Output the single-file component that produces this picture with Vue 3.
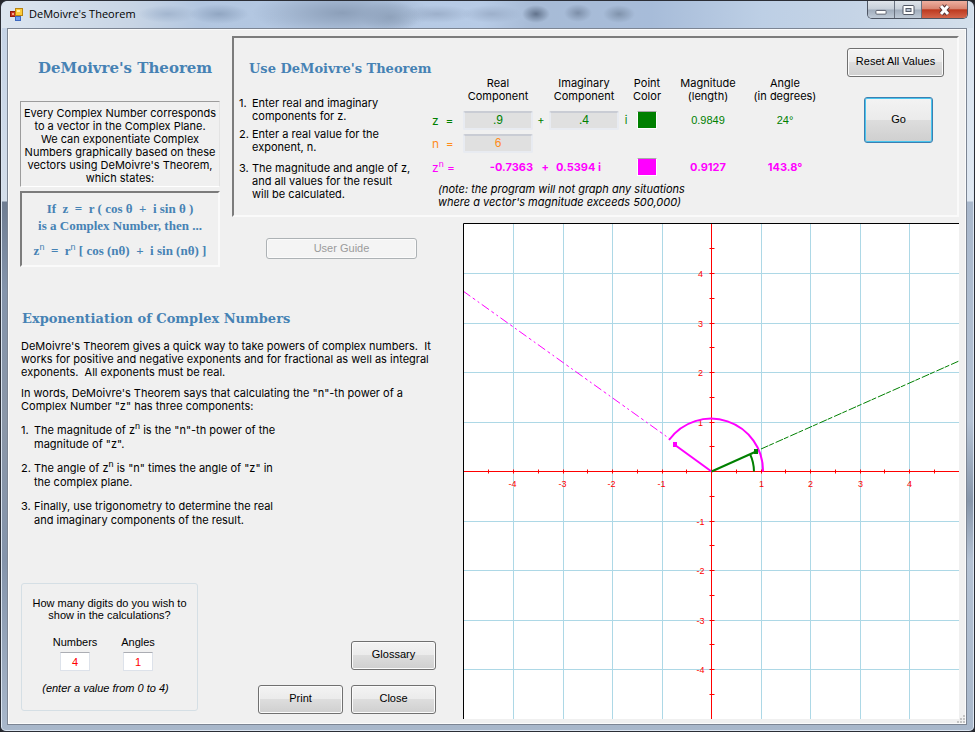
<script setup>
import { ref } from 'vue'

const realPart = ref('.9')
const imaginaryPart = ref('.4')
const exponent = ref('6')
const numberDigits = ref('4')
const angleDigits = ref('1')

// Plot geometry: centre of the axes and pixels per unit inside the view box
const cx = 248.5
const cy = 248.5
const unit = 49.5
const px = (n) => Math.round(cx + n * unit - 0.5) + 0.5
const py = (n) => Math.round(cy - n * unit - 0.5) + 0.5

const units = [-4, -3, -2, -1, 1, 2, 3, 4]
const ticks = []
for (let i = -9; i <= 9; i++) if (i !== 0) ticks.push(i / 2)
</script>

<template>
  <main class="window">
    <header class="titlebar">
      <svg class="app-icon" viewBox="0 0 13 13" aria-hidden="true">
        <rect x="0.5" y="3.5" width="5" height="5" fill="#c8321e" stroke="#8e1c10" />
        <rect x="2" y="5" width="2" height="2" fill="#f5a58c" />
        <rect x="5.5" y="0.5" width="7" height="7" fill="#fccb3a" stroke="#b98410" />
        <rect x="7" y="2" width="3" height="2" fill="#fff0ac" />
        <rect x="5.5" y="8.5" width="5" height="4" fill="#6e9df0" stroke="#3d69c0" />
      </svg>
      <h1 class="title">DeMoivre's Theorem</h1>
      <div class="window-buttons">
        <button type="button" class="wb" aria-label="Minimize">
          <svg viewBox="0 0 28 17"><rect x="8.5" y="9.5" width="11" height="4" rx="1" fill="#fff" stroke="#535966" /></svg>
        </button>
        <button type="button" class="wb" aria-label="Maximize">
          <svg viewBox="0 0 25 17">
            <rect x="7.5" y="4.5" width="11" height="9" rx="1" fill="#fff" stroke="#535966" />
            <rect x="10.5" y="7.5" width="5" height="3" fill="#b9c4d4" stroke="#535966" />
          </svg>
        </button>
        <button type="button" class="wb wb-close" aria-label="Close window">
          <svg viewBox="0 0 45 17">
            <path d="M19 5l7 8M26 5l-7 8" stroke="#5a3536" stroke-width="5" />
            <path d="M19 5l7 8M26 5l-7 8" stroke="#fff" stroke-width="3" />
          </svg>
        </button>
      </div>
    </header>

    <div class="client">
      <section class="intro">
        <h2 class="heading heading-main">DeMoivre's Theorem</h2>
        <p class="sunken intro-text">
          Every Complex Number corresponds<br />to a vector in the Complex Plane.<br />We can exponentiate
          Complex<br />Numbers graphically based on these<br />vectors using DeMoivre's Theorem,<br />which states:
        </p>
        <div class="sunken deep formula">
          <p>If&nbsp; z&nbsp; =&nbsp; r ( cos θ&nbsp; +&nbsp; i sin θ )</p>
          <p>is a Complex Number, then ...</p>
          <p class="formula-last">z<sup>n</sup>&nbsp; =&nbsp; r<sup>n</sup> [ cos (nθ)&nbsp; +&nbsp; i sin (nθ) ]</p>
        </div>
      </section>

      <section class="use sunken deep">
        <div class="how">
          <h2 class="heading heading-use">Use DeMoivre's Theorem</h2>
          <ol class="steps">
            <li><span>1.</span><span>Enter real and imaginary<br />components for z.</span></li>
            <li><span>2.</span><span>Enter a real value for the<br />exponent, n.</span></li>
            <li class="step-last"><span>3.</span><span>The magnitude and angle of z,<br />and all values for the result<br />will be calculated.</span></li>
          </ol>
        </div>

        <form class="calc" @submit.prevent>
          <div class="calc-grid">
            <span></span>
            <label for="real" class="head">Real<br />Component</label>
            <span></span>
            <label for="imag" class="head">Imaginary<br />Component</label>
            <span></span>
            <span class="head">Point<br />Color</span>
            <span class="head">Magnitude<br />(length)</span>
            <span class="head">Angle<br />(in degrees)</span>

            <span class="name green">z&nbsp; =</span>
            <input id="real" v-model="realPart" class="entry green" />
            <span class="green mid">+</span>
            <input id="imag" v-model="imaginaryPart" class="entry green" />
            <span class="green mid">i</span>
            <button type="button" class="swatch swatch-z" aria-label="Color of z"></button>
            <span class="small green mid">0.9849</span>
            <span class="small green mid">24°</span>

            <label for="exponent" class="name orange">n&nbsp; =</label>
            <input id="exponent" v-model="exponent" class="entry orange" />
            <span class="rest"></span>

            <span class="name magenta">z<sup>n</sup> =</span>
            <output class="magenta strong right">-0.7363</output>
            <span class="magenta strong right">+</span>
            <output class="magenta strong result-im">0.5394 i</output>
            <span></span>
            <button type="button" class="swatch swatch-zn" aria-label="Color of z to the n"></button>
            <output class="magenta strong mid">0.9127</output>
            <output class="magenta strong mid">143.8°</output>
          </div>
          <p class="note">(note: the program will not graph any situations<br />where a vector's magnitude exceeds 500,000)</p>
        </form>

        <div class="actions">
          <button type="button" class="btn btn-reset">Reset All Values</button>
          <button type="button" class="btn btn-go">Go</button>
        </div>
      </section>

      <div class="guide">
        <button type="button" class="btn btn-guide" disabled>User Guide</button>
      </div>

      <svg class="plot" viewBox="0 0 496 496" role="img" aria-label="Complex plane">
        <rect width="496" height="496" fill="#fff" />
        <g stroke="#add8e6" fill="none">
          <path v-for="u in units" :key="'g' + u" :d="`M${px(u)} 0V496M0 ${py(u)}H496`" />
        </g>
        <rect x="248" y="0" width="1" height="496" fill="#ff0000" />
        <rect x="0" y="248" width="496" height="1" fill="#ff0000" />
        <g stroke="#ff0000" fill="none">
          <path v-for="t in ticks" :key="'t' + t" :d="`M${px(t)} ${cy - 2}v4M${cx - 2} ${py(t)}h5`" />
        </g>
        <g class="axis-text">
          <text v-for="u in units" :key="'x' + u" :x="px(u) - (u < 0 ? 1 : 0)" :y="cy + 15">{{ u }}</text>
          <text v-for="u in units" :key="'y' + u" :x="cx - 11" :y="py(u) + 3">{{ u }}</text>
        </g>
        <g fill="none">
          <path d="M0 68L207 216" stroke="#ff00ff" stroke-dasharray="9 3 3 3 2 3" />
          <path d="M298 226L496 138" stroke="#008000" stroke-dasharray="8 1 5 2" />
          <path d="M248.5 248.5L212 222" stroke="#ff00ff" stroke-width="2" />
          <path d="M300 248.5A52 52 0 0 0 206 217" stroke="#ff00ff" stroke-width="2" />
          <path d="M248.5 248.5L292 229" stroke="#008000" stroke-width="2" />
          <path d="M291 248.5A43 43 0 0 0 287 231" stroke="#008000" stroke-width="2" />
        </g>
        <rect x="210" y="219" width="4" height="5" fill="#ff00ff" />
        <rect x="291" y="226" width="4" height="5" fill="#008000" />
        <path d="M0.5 496V0.5H496" stroke="#000" fill="none" />
      </svg>

      <section class="theory">
        <h2 class="heading heading-exp">Exponentiation of Complex Numbers</h2>
        <p class="theory-p">
          DeMoivre's Theorem gives a quick way to take powers of complex numbers.&nbsp; It<br />works for positive and
          negative exponents and for fractional as well as integral<br />exponents.&nbsp; All exponents must be real.
        </p>
        <p class="theory-p">
          In words, DeMoivre's Theorem says that calculating the "n"-th power of a<br />Complex Number "z" has three
          components:
        </p>
        <ol class="points">
          <li><span>1.</span><span>The magnitude of z<sup>n</sup> is the "n"-th power of the<br />magnitude of "z".</span></li>
          <li><span>2.</span><span>The angle of z<sup>n</sup> is "n" times the angle of "z" in<br />the complex plane.</span></li>
          <li><span>3.</span><span>Finally, use trigonometry to determine the real<br />and imaginary components of the result.</span></li>
        </ol>

        <div class="bottom">
          <fieldset class="digits">
            <p>How many digits do you wish to<br />show in the calculations?</p>
            <div class="digit-fields">
              <label>Numbers<input v-model="numberDigits" /></label>
              <label>Angles<input v-model="angleDigits" /></label>
            </div>
            <p class="hint">(enter a value from 0 to 4)</p>
          </fieldset>
          <div class="buttons">
            <button type="button" class="btn btn-glossary">Glossary</button>
            <button type="button" class="btn">Print</button>
            <button type="button" class="btn">Close</button>
          </div>
        </div>
      </section>

      <svg class="grip" viewBox="0 0 9 9" aria-hidden="true">
        <path d="M6 0h2v2h-2zM3 3h2v2h-2zM6 3h2v2h-2zM0 6h2v2h-2zM3 6h2v2h-2zM6 6h2v2h-2z" fill="#c4c4c4" />
      </svg>
    </div>
  </main>
</template>

<style>
body {
  margin: 0;
  background: #23252b;
}
</style>

<style scoped>
* {
  box-sizing: border-box;
}
p,
h1,
h2,
ol {
  margin: 0;
  padding: 0;
  list-style: none;
}
button,
input {
  font: inherit;
  margin: 0;
}
.window {
  display: flex;
  flex-direction: column;
  min-height: 100vh;
  padding: 0 7px 6px 6px;
  border: 1px solid #2b2e36;
  border-width: 1px 1px 2px 1px;
  border-radius: 7px 7px 6px 6px;
  background:
    linear-gradient(180deg, #dbe5f0 0, #dfe8f2 200px, #a9b8cc 201px, #b4c2d4 420px, #8796aa 500px, #b4c2d4 560px, #a9b8cb 100%) right / 8px 100% no-repeat,
    linear-gradient(180deg, #c3d2e6 0, #d4deea 200px, #6f7d92 201px, #8494ab 290px, #8b97a8 420px, #8494ab 560px, #a9b8cb 100%);
  box-shadow: inset 0 0 0 1px #dce6f2;
  font: 11px/13px Inter, 'Liberation Sans', Arial, sans-serif;
  color: #000;
}
.titlebar {
  display: flex;
  height: 27px;
  margin: 0 -6px 0 -5px;
  padding: 0 5px 0 8px;
  border-radius: 6px 6px 0 0;
  background:
    radial-gradient(ellipse 14px 9px at 534px 13px, #62738c 0, transparent 100%),
    radial-gradient(ellipse 14px 9px at 576px 12px, #7d8fa9 0, transparent 100%),
    radial-gradient(ellipse 16px 9px at 617px 13px, #8093ac 0, transparent 100%),
    radial-gradient(ellipse 90px 24px at 340px 12px, #8c9fb9 0, transparent 100%),
    radial-gradient(ellipse 30px 16px at 388px 16px, #92a5be 0, transparent 100%),
    radial-gradient(ellipse 36px 9px at 435px 13px, #9db0cb 0, transparent 100%),
    radial-gradient(ellipse 30px 9px at 490px 13px, #9db0cb 0, transparent 100%),
    radial-gradient(ellipse 30px 10px at 217px 13px, #91a6c2 0, transparent 100%),
    radial-gradient(ellipse 30px 9px at 166px 13px, #a3b6cf 0, transparent 100%),
    linear-gradient(90deg, #dce5ef 0, #c8d5e5 130px, #b2c6e0 200px, #b7cbe6 480px, #a7bbd6 530px, #a7bcd9 650px, #bdcfe5 760px, #c5d4e6 850px, #d3dfeb 100%);
}
.app-icon {
  width: 13px;
  height: 13px;
  margin-top: 7px;
}
.title {
  flex: 1;
  margin-left: 6px;
  font: normal 11px/26px 'Open Sans', 'Liberation Sans', sans-serif;
}
.window-buttons {
  display: flex;
  height: 18px;
  border: 1px solid #4d5563;
  border-top: 0;
  border-radius: 0 0 5px 5px;
  overflow: hidden;
}
.wb {
  width: 27px;
  padding: 0;
  border: 0;
  border-right: 1px solid #6a7280;
  background: linear-gradient(#dfe4ea 0, #c6ced8 48%, #a0acbb 52%, #bfcad7 100%);
}
.wb svg {
  display: block;
  width: 100%;
  height: 17px;
}
.wb-close {
  width: 45px;
  border-right: 0;
  background: linear-gradient(#eeb0a0 0, #d98672 45%, #bd3a20 52%, #d4664c 100%);
}
.client {
  position: relative;
  flex: 1;
  display: grid;
  grid-template-columns: 212px 231px minmax(0, 1fr);
  grid-template-rows: 181px 43px auto;
  row-gap: 6px;
  padding: 7px 7px 5px 12px;
  border: 1px solid #7c8593;
  background: #f0f0f0;
  box-shadow: inset 0 0 0 1px #fbfbfb;
}
.heading {
  color: #4682b4;
  font-family: 'DejaVu Serif', serif;
  font-weight: bold;
  white-space: nowrap;
}
.sunken {
  border: 1px solid;
  border-color: #9c9c9c #e3e3e3 #fff #9c9c9c;
}
.deep {
  border-width: 2px;
  border-color: #7c7c7c #fafafa #fafafa #7c7c7c;
}
.intro {
  grid-row: 1 / 3;
  grid-column: 1;
  width: 200px;
}
.heading-main {
  margin: 22px 0 23px 18px;
  font-size: 15px;
  line-height: 20px;
}
.intro-text {
  padding: 5px 0 0;
  height: 86px;
  text-align: center;
  white-space: nowrap;
}
.formula {
  height: 76px;
  margin-top: 4px;
  padding-top: 7px;
  text-align: center;
  color: #4682b4;
  font: bold 13px/17px 'Liberation Serif', serif;
  white-space: nowrap;
}
.formula-last {
  margin-top: 8px;
}
sup {
  font: 9px/1 'Liberation Sans', Arial, sans-serif;
  line-height: 0;
  vertical-align: 5px;
}
.use {
  grid-column: 2 / 4;
  grid-row: 1;
  display: flex;
}
.how {
  width: 198px;
}
.heading-use {
  margin: 21px 0 18px 15px;
  font-size: 13px;
  line-height: 20px;
}
.steps li {
  display: grid;
  grid-template-columns: 13px auto;
  margin: 0 0 5px 5px;
  white-space: nowrap;
}
.steps .step-last {
  margin-top: 8px;
}
.calc {
  padding-top: 39px;
}
.calc-grid {
  display: grid;
  grid-template-columns: 31px 70px 16px 70px 14px 28px 94px 60px;
  grid-template-rows: 30px 20px 20px 22px;
  row-gap: 3px;
  align-items: center;
}
.head {
  justify-self: center;
  align-self: start;
  text-align: center;
  white-space: nowrap;
}
.name,
.mid,
.strong {
  white-space: nowrap;
}
.name {
  font-size: 12px;
}
.mid {
  text-align: center;
}
.right {
  text-align: right;
}
.rest {
  grid-column: span 6;
}
.result-im {
  padding-left: 7px;
}
.strong {
  font-weight: bold;
}
.small {
  font: 11px/13px 'Liberation Sans', Arial, sans-serif;
}
.green {
  color: #008000;
}
.orange {
  color: #ff8c1a;
}
.magenta {
  color: #ff00ff;
}
.entry {
  width: 70px;
  height: 19px;
  padding: 0;
  border: 2px solid #e8ebf1;
  border-top-color: #c9ccd4;
  border-radius: 2px;
  background: #e0e0e0;
  font: 12px 'Liberation Sans', Arial, sans-serif;
  text-align: center;
}
.swatch {
  justify-self: center;
  width: 20px;
  height: 18px;
  border: 1px solid #fff;
  border-top-color: #a9a9a9;
}
.swatch-z {
  background: #008000;
}
.swatch-zn {
  background: #ff00ff;
}
.note {
  margin: 5px 0 0 6px;
  font-style: italic;
  line-height: 13px;
  white-space: nowrap;
}
.actions {
  flex: 1;
  display: flex;
  flex-direction: column;
  align-items: flex-end;
  gap: 20px;
  padding: 10px 13px 0 0;
}
.btn {
  height: 29px;
  padding: 0 0 2px;
  border: 1px solid #707070;
  border-radius: 3px;
  background: linear-gradient(#f3f3f3 0, #ebebeb 49%, #dddddd 50%, #cfcfcf 100%);
  box-shadow: inset 0 0 0 1px #fbfbfb;
  font: 11px/13px 'Liberation Sans', Arial, sans-serif;
  color: #000;
}
.btn-reset {
  width: 97px;
}
.btn-go {
  width: 69px;
  height: 46px;
  margin-right: 11px;
  border-color: #3c7fb1;
  box-shadow: inset 0 0 0 1px #48c5ee;
}
.guide {
  grid-column: 2;
  grid-row: 2;
  padding: 15px 0 0 34px;
}
.btn-guide {
  width: 151px;
  height: 21px;
  padding: 0;
  border-color: #adb2b5;
  background: #f4f4f4;
  color: #9b9b9b;
}
.plot {
  grid-column: 3;
  grid-row: 2 / 4;
  display: block;
  width: 100%;
}
.axis-text {
  fill: #ff0000;
  font: 9px 'Liberation Sans', Arial, sans-serif;
  text-anchor: middle;
}
.theory {
  grid-column: 1 / 3;
  grid-row: 3;
  display: flex;
  flex-direction: column;
  padding-left: 1px;
}
.heading-exp {
  margin: 37px 0 11px 1px;
  font-size: 13px;
  line-height: 20px;
}
.theory-p {
  margin-bottom: 8px;
  white-space: nowrap;
}
.points {
  margin-top: 2px;
}
.points li {
  display: grid;
  grid-template-columns: 13px auto;
  margin-bottom: 10px;
  line-height: 14px;
  white-space: nowrap;
}
.bottom {
  display: flex;
  justify-content: space-between;
  align-items: flex-end;
  margin-top: auto;
  padding: 0 27px 5px 0;
}
.digits {
  width: 177px;
  height: 128px;
  margin: 0 0 3px;
  padding: 13px 0 0;
  border: 1px solid #d5dfe5;
  border-radius: 3px;
  font: 11px/12px 'Liberation Sans', Arial, sans-serif;
  text-align: center;
}
.digit-fields {
  display: flex;
  justify-content: center;
  gap: 21px;
  margin: 15px 0 11px;
  padding-right: 6px;
}
.digit-fields label {
  display: flex;
  flex-direction: column;
  align-items: center;
  gap: 4px;
  width: 42px;
}
.digit-fields input {
  width: 30px;
  height: 19px;
  padding: 0;
  border: 1px solid #dde2ea;
  border-top-color: #abadb3;
  background: #fff;
  color: #ff0000;
  text-align: center;
}
.hint {
  padding-right: 8px;
  font-style: italic;
}
.buttons {
  display: grid;
  grid-template-columns: 85px 85px;
  gap: 15px 8px;
}
.btn-glossary {
  grid-column: 2;
}
.grip {
  position: absolute;
  right: 0;
  bottom: 0;
  width: 9px;
  height: 9px;
}
</style>
